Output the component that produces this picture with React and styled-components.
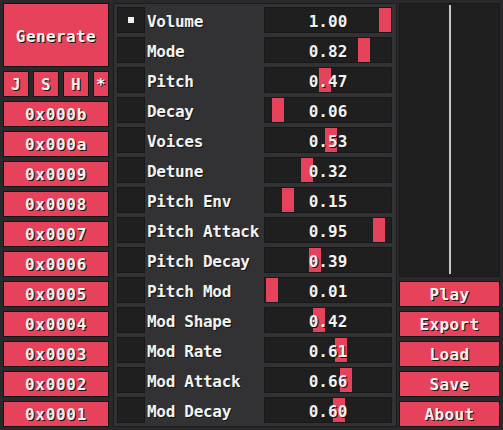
import React from 'react'
import styled, { createGlobalStyle } from 'styled-components'

const GlobalStyle = createGlobalStyle`
  html, body {
    margin: 0;
    padding: 0;
    background: #29292b;
  }
  * { box-sizing: border-box; }
`

const params = [
  { name: 'Volume', value: 1.0, checked: true },
  { name: 'Mode', value: 0.82 },
  { name: 'Pitch', value: 0.47 },
  { name: 'Decay', value: 0.06 },
  { name: 'Voices', value: 0.53 },
  { name: 'Detune', value: 0.32 },
  { name: 'Pitch Env', value: 0.15 },
  { name: 'Pitch Attack', value: 0.95 },
  { name: 'Pitch Decay', value: 0.39 },
  { name: 'Pitch Mod', value: 0.01 },
  { name: 'Mod Shape', value: 0.42 },
  { name: 'Mod Rate', value: 0.61 },
  { name: 'Mod Attack', value: 0.66 },
  { name: 'Mod Decay', value: 0.6 }
]

const presets = ['0x000b', '0x000a', '0x0009', '0x0008', '0x0007', '0x0006', '0x0005', '0x0004', '0x0003', '0x0002', '0x0001']

export default function App() {
  return (
    <>
      <GlobalStyle />
      <Screen>
        <LeftColumn>
          <Button tall>Generate</Button>
          <ModeRow>
            <Button>J</Button>
            <Button>S</Button>
            <Button>H</Button>
            <Button>*</Button>
          </ModeRow>
          {presets.map(p => (
            <Button key={p} spaced>{p}</Button>
          ))}
        </LeftColumn>

        <Panel>
          {params.map(p => (
            <Row key={p.name}>
              <Check>{p.checked && <Mark />}</Check>
              <Label>{p.name}</Label>
              <Slider>
                <Thumb style={{ left: `${p.value * 114}px` }} />
                <Value>{p.value.toFixed(2)}</Value>
              </Slider>
            </Row>
          ))}
        </Panel>

        <RightColumn>
          <Scope>
            <WaveLine />
          </Scope>
          <Button>Play</Button>
          <Button>Export</Button>
          <Button>Load</Button>
          <Button>Save</Button>
          <Button>About</Button>
        </RightColumn>
      </Screen>
    </>
  )
}

const Screen = styled.div`
  width: 503px;
  height: 430px;
  display: flex;
  padding: 3px;
  gap: 4px;
  font-family: 'DejaVu Sans Mono', 'Liberation Mono', monospace;
  font-weight: bold;
  font-size: 16px;
  color: #f2f2ee;
  text-shadow: 1px 1px 0 #151515;
`

const LeftColumn = styled.div`
  width: 106px;
  display: flex;
  flex-direction: column;
  gap: 4px;
`

const ModeRow = styled.div`
  display: grid;
  grid-template-columns: 26px 26px 26px 16px;
  gap: 4px;
`

const Button = styled.div`
  height: ${p => (p.tall ? '64px' : '26px')};
  background: #e7425b;
  border: 1px solid #161616;
  display: flex;
  align-items: center;
  justify-content: center;
  padding-top: ${p => (p.tall ? '4px' : '2px')};
  letter-spacing: ${p => (p.spaced ? '0.7px' : '0.4px')};
  line-height: 1;
`

const Panel = styled.div`
  width: 284px;
  height: 424px;
  background: #323234;
  border: 1px solid #1c1c1e;
  padding: 3px 4px 3px 3px;
  display: flex;
  flex-direction: column;
  gap: 4px;
`

const Row = styled.div`
  height: 26px;
  display: grid;
  grid-template-columns: 28px 1fr 128px;
  gap: 2px;
  align-items: stretch;
`

const Check = styled.div`
  background: #1f1f20;
  border: 1px solid #18181a;
  display: flex;
  align-items: center;
  justify-content: center;
`

const Mark = styled.div`
  width: 6px;
  height: 6px;
  background: #eeeeea;
`

const Label = styled.div`
  display: flex;
  align-items: center;
  padding-top: 2px;
  letter-spacing: -0.3px;
  white-space: nowrap;
`

const Slider = styled.div`
  position: relative;
  background: #1f1f20;
  border: 1px solid #18181a;
  display: flex;
  align-items: center;
  justify-content: center;
  padding-top: 2px;
`

const Thumb = styled.div`
  position: absolute;
  top: 0;
  bottom: 0;
  width: 12px;
  background: #e7425b;
`

const Value = styled.span`
  position: relative;
`

const RightColumn = styled.div`
  width: 101px;
  margin-left: -2px;
  display: flex;
  flex-direction: column;
  gap: 4px;
`

const Scope = styled.div`
  height: 274px;
  background: #1f1f20;
  border: 1px solid #18181a;
  display: flex;
  justify-content: center;
  padding: 1px 0 2px;
`

const WaveLine = styled.div`
  width: 2px;
  background: #c8c8c0;
`
